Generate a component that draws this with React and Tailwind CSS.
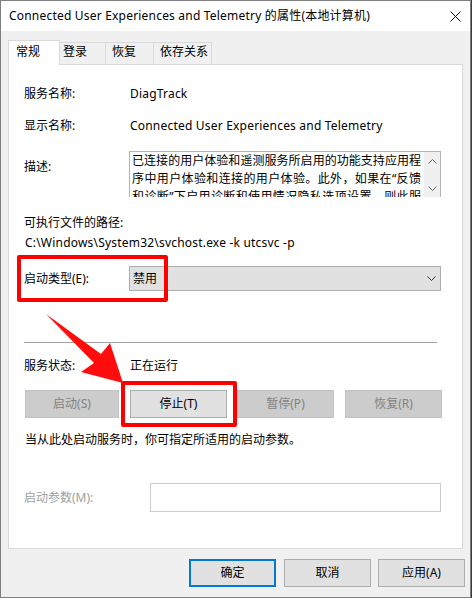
import React from 'react'

const tabs = [
  { label: '登录', w: 'w-[46px]', pl: 'pl-[3px]' },
  { label: '恢复', w: 'w-[48px]', pl: 'pl-[6px]' },
  { label: '依存关系', w: 'w-[58px]', pl: 'pl-[6px]' },
]

const descLines = [
  '已连接的用户体验和遥测服务所启用的功能支持应用程',
  '序中用户体验和连接的用户体验。此外，如果在“反馈',
  '和诊断”下启用诊断和使用情况隐私选项设置，则此服',
]

function Chevron({ up = false, className = '' }) {
  return (
    <svg width="9" height="5" viewBox="0 0 9 5" className={className}>
      <path
        d={up ? 'M0.5 4.5 L4.5 0.5 L8.5 4.5' : 'M0.5 0.5 L4.5 4.5 L8.5 0.5'}
        fill="none"
        stroke="currentColor"
        strokeWidth="1"
      />
    </svg>
  )
}

function Row({ label, children, className = '' }) {
  return (
    <div className={`flex items-center h-[18px] leading-[18px] ${className}`}>
      <div className="w-[106px] shrink-0">{label}</div>
      <div>{children}</div>
    </div>
  )
}

function ServiceButton({ label, disabled, className = '' }) {
  return (
    <div
      className={`h-[28px] flex items-center justify-center border ${
        disabled
          ? 'bg-[#cccccc] border-[#c2c2c2] text-[#838383]'
          : 'bg-[#e1e1e1] border-[#adadad] text-black'
      } ${className}`}
    >
      {label}
    </div>
  )
}

export default function App() {
  return (
    <div className="w-[472px] h-[598px] bg-[#3a3a3a] [font-family:'Noto_Sans','Noto_Sans_CJK_SC',sans-serif] text-[12px] text-black">
      <div className="relative w-[471px] h-[598px] bg-[#f0f0f0] border border-[#7e7e7e] flex flex-col overflow-hidden">
        {/* title bar */}
        <div className="h-[30px] bg-white flex items-center justify-between pl-[8px] pr-[9px] shrink-0">
          <span className="leading-[16px] whitespace-nowrap tracking-[0.2px]">
            Connected User Experiences and Telemetry 的属性(本地计算机)
          </span>
          <svg width="11" height="11" viewBox="0 0 11 11">
            <path d="M0.5 0.5 L10.5 10.5 M10.5 0.5 L0.5 10.5" stroke="#111" strokeWidth="1" />
          </svg>
        </div>

        {/* tabs */}
        <div className="flex items-end h-[24px] mt-[9px] px-[7px] relative z-10">
          <div className="w-[52px] h-[25px] -mb-px bg-white border border-b-0 border-[#d9d9d9] pl-[7px] pt-[3px] leading-[16px]">
            常规
          </div>
          {tabs.map((t) => (
            <div
              key={t.label}
              className={`${t.w} ${t.pl} h-[22px] border-t border-r border-[#d9d9d9] pt-[1px] leading-[16px] whitespace-nowrap`}
            >
              {t.label}
            </div>
          ))}
        </div>

        {/* panel */}
        <div className="mx-[7px] w-[455px] h-[485px] bg-white border border-[#d9d9d9] pl-[15px] flex flex-col">
          <Row label="服务名称:" className="mt-[20px]">
            <span className="tracking-[0.2px]">DiagTrack</span>
          </Row>
          <Row label="显示名称:" className="mt-[14px]">
            <span className="whitespace-nowrap tracking-[0.2px]">Connected User Experiences and Telemetry</span>
          </Row>

          <div className="flex mt-[16px] h-[46px]">
            <div className="w-[105px] shrink-0 mt-[7px] leading-[18px]">描述:</div>
            <div className="w-[312px] h-[46px] border border-b-0 border-[#b5b5b5] flex overflow-hidden">
              <div className="w-[294px] shrink-0 pl-[2px] leading-[18px] overflow-hidden">
                {descLines.map((l) => (
                  <div key={l} className="w-[289px] whitespace-nowrap text-justify [text-align-last:justify]">
                    {l}
                  </div>
                ))}
              </div>
              <div className="w-[16px] bg-[#f0f0f0] flex flex-col items-center justify-between pt-[7px] pb-[6px] text-[#606060]">
                <Chevron up />
                <Chevron />
              </div>
            </div>
          </div>

          <div className="mt-[17px] h-[18px] leading-[18px]">可执行文件的路径:</div>
          <div className="mt-[2px] h-[18px] leading-[18px] pl-[1px] tracking-[0.2px]">
            C:\Windows\System32\svchost.exe -k utcsvc -p
          </div>

          <div className="flex items-center mt-[14px] h-[25px]">
            <div className="w-[105px] shrink-0">启动类型(E):</div>
            <div className="w-[312px] h-[25px] bg-[#e1e1e1] border border-[#adadad] flex items-center justify-between pl-[3px] pr-[4px]">
              <span>禁用</span>
              <Chevron className="text-[#333]" />
            </div>
          </div>

          <div className="mt-[51px] w-[413px] h-px bg-[#a0a0a0]" />

          <Row label="服务状态:" className="mt-[14px]">正在运行</Row>

          <div className="flex mt-[15px] pl-[1px]">
            <ServiceButton label="启动(S)" disabled className="w-[94px]" />
            <ServiceButton label="停止(T)" className="w-[97px] ml-[11px]" />
            <ServiceButton label="暂停(P)" disabled className="w-[97px] ml-[10px]" />
            <ServiceButton label="恢复(R)" disabled className="w-[97px] ml-[11px]" />
          </div>

          <div className="mt-[13px] h-[18px] leading-[18px] pl-[1px]">
            当从此处启动服务时，你可指定所适用的启动参数。
          </div>

          <div className="flex items-center mt-[34px] h-[29px]">
            <div className="w-[126px] shrink-0 text-[#a0a0a0]">启动参数(M):</div>
            <div className="w-[291px] h-[29px] bg-white border border-[#cccccc]" />
          </div>
        </div>

        {/* dialog buttons */}
        <div className="flex mt-[10px] pl-[188px]">
          <div className="w-[87px] h-[28px] bg-[#e1e1e1] border-2 border-[#0078d7] flex items-center justify-center">确定</div>
          <div className="w-[87px] h-[28px] ml-[8px] bg-[#e1e1e1] border border-[#adadad] flex items-center justify-center">取消</div>
          <div className="w-[87px] h-[28px] ml-[7px] bg-[#e1e1e1] border border-[#adadad] flex items-center justify-center">应用(A)</div>
        </div>

        {/* annotations */}
        <div className="absolute left-[16px] top-[254px] w-[151px] h-[47px] border-[4px] border-[#ff0000] rounded-[2px]" />
        <div className="absolute left-[120px] top-[380px] w-[116px] h-[46px] border-[4px] border-[#ff0000] rounded-[2px]" />
        <svg className="absolute left-0 top-0" width="471" height="598" viewBox="-1 -1 471 598">
          <polygon points="44,312 99,352 108,341 121,381 79,370 92,361" fill="#ff0d0d" />
        </svg>
      </div>
    </div>
  )
}
